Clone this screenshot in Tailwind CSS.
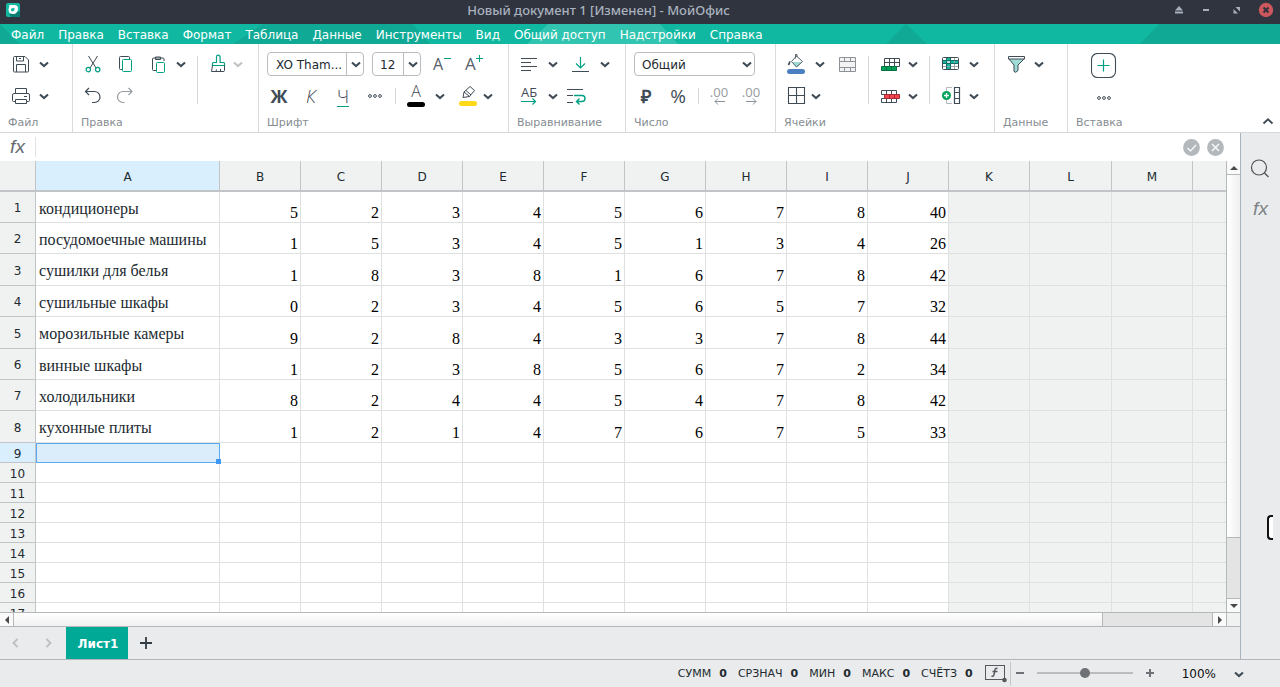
<!DOCTYPE html>
<html lang="ru">
<head>
<meta charset="utf-8">
<title>Новый документ 1 - МойОфис</title>
<script src="https://cdn.jsdelivr.net/npm/@tailwindcss/browser@4"></script>
</head>
<body class="flex h-screen flex-col overflow-hidden bg-white font-['DejaVu_Sans',sans-serif] text-xs text-[#222a30]">

<svg class="hidden" aria-hidden="true">
  <symbol id="chev" viewBox="0 0 12 12"><path d="M2 4.500 6 8 10 4.500" fill="none" stroke="currentColor" stroke-width="2.100"/></symbol>
  <symbol id="dots" viewBox="0 0 24 24"><g fill="none" stroke="#3f4b55"><circle cx="7" cy="12" r="1.400"/><circle cx="12" cy="12" r="1.400"/><circle cx="17" cy="12" r="1.400"/></g></symbol>
</svg>

<!-- Window title -->
<header class="flex h-6 shrink-0 items-center bg-[#2f343f] px-1.5 pb-1">
  <svg class="size-[14px] shrink-0" viewBox="0 0 14 14"><rect width="14" height="14" rx="2" fill="#12b8a0"/><path d="M14 8v6H5l-2-3z" fill="#087f75"/><path d="M3.500 2h5a3.500 3.500 0 0 1 3.500 3.500c0 3.500-2 5.500-5 5.500-2.800 0-4.500-1.500-4.500-4.500z" fill="#fff"/><path d="M5.200 5.500 8.500 4.800 8.500 7 7 8.500 5 8z" fill="#12b8a0"/></svg>
  <h1 class="flex-1 pr-2 pl-[14px] text-center font-['Noto_Sans',sans-serif] text-[13px] leading-5 font-medium text-[#a9b1be]">Новый документ 1 [Изменен] - МойОфис</h1>
  <div class="flex items-center gap-[13px] text-[#a9b0bb]">
    <button aria-label="Свернуть в заголовок" class="size-4"><svg viewBox="0 0 16 16"><path d="M8 4l4 4.500H4zM4 9.500h8v2H4z" fill="currentColor"/></svg></button>
    <button aria-label="Свернуть" class="size-4"><svg viewBox="0 0 16 16"><path d="M3 7h6v2H3z" fill="currentColor"/></svg></button>
    <button aria-label="Развернуть" class="size-4"><svg viewBox="0 0 16 16"><path d="M6.500 5H11v4.500zM4.500 7v4.500H9z" fill="currentColor"/></svg></button>
    <button aria-label="Закрыть" class="size-4"><svg viewBox="0 0 16 16"><circle cx="8" cy="8" r="7.200" fill="#cc575d"/><path d="M5.500 5.500l5 5M10.500 5.500l-5 5" stroke="#2f343f" stroke-width="2"/></svg></button>
  </div>
</header>

<!-- Menu -->
<nav class="relative h-5 shrink-0 overflow-hidden bg-[#11b8a1]">
  <svg class="absolute top-0 left-0 h-5 w-[1280px]" viewBox="0 0 1280 20" aria-hidden="true">
    <path d="M0 0 20 20H0zM263 0H413L430 20H233zM906 0 927 20H886zM1159 0H1280V20H1140z" fill="#10a995"/>
    <path d="M548 0H660L678 20H527z" fill="#31c4b0"/>
  </svg>
  <div class="relative flex h-5 items-center gap-[14px] pt-0.5 pl-[11px] leading-4 whitespace-nowrap text-white">
    <a href="#">Файл</a><a href="#">Правка</a><a href="#">Вставка</a><a href="#">Формат</a><a href="#">Таблица</a><a href="#">Данные</a><a href="#">Инструменты</a><a href="#">Вид</a><a href="#">Общий доступ</a><a href="#">Надстройки</a><a href="#">Справка</a>
  </div>
</nav>

<!-- Ribbon -->
<section class="flex h-[89px] shrink-0 border-b border-[#d5d7d9] text-[#3f4b55]">
  <div class="flex w-[73px] flex-col border-r border-[#d9dbdd] pt-1">
    <div class="flex h-8 items-center gap-[5px] pl-[9px]">
      <button aria-label="Сохранить"><svg class="size-6" viewBox="0 0 24 24" fill="none" stroke="#3f4b55"><path d="M5.500 4.500H16L19.500 8v11a1 1 0 0 1-1 1h-13a1 1 0 0 1-1-1v-13.500a1 1 0 0 1 1-1zM7.500 4.500v4.500h7v-4.500M10 6.500h2M7.500 20v-7.500h9V20"/></svg></button>
      <button aria-label="Варианты сохранения"><svg class="size-3"><use href="#chev"/></svg></button>
    </div>
    <div class="flex h-8 items-center gap-[5px] pl-[9px]">
      <button aria-label="Печать"><svg class="size-6" viewBox="0 0 24 24" fill="none" stroke="#3f4b55"><path d="M6.500 9.500v-5h11v5M6.500 17.500h-2a1 1 0 0 1-1-1v-5.500a1.500 1.500 0 0 1 1.500-1.500h14a1.500 1.500 0 0 1 1.500 1.500v5.500a1 1 0 0 1-1 1h-2M6.500 15.500h11v4h-11zM15 12.500h3"/></svg></button>
      <button aria-label="Варианты печати"><svg class="size-3"><use href="#chev"/></svg></button>
    </div>
    <h2 class="pt-0.5 pl-2 text-[11px] leading-[18px] text-[#868d92]">Файл</h2>
  </div>

  <div class="flex w-[186px] flex-col border-r border-[#d9dbdd] pt-1">
    <div class="flex h-16">
      <div class="w-[124px]">
        <div class="flex h-8 items-center gap-2 pl-2">
          <button aria-label="Вырезать"><svg class="size-6" viewBox="0 0 24 24" fill="none"><path d="M7.500 4 15 16M16.500 4 9 16" stroke="#3f4b55"/><circle cx="7.300" cy="17.600" r="2.200" stroke="#00a083" stroke-width="1.200"/><circle cx="16.700" cy="17.600" r="2.200" stroke="#00a083" stroke-width="1.200"/></svg></button>
          <button aria-label="Копировать"><svg class="size-6" viewBox="0 0 24 24" fill="none"><path d="M9 17.500H7.500a1 1 0 0 1-1-1V5.500a1 1 0 0 1 1-1h8a1 1 0 0 1 1 1V7" stroke="#3f4b55"/><rect x="9.500" y="7.500" width="9" height="12" rx="1" stroke="#00a083"/></svg></button>
          <button aria-label="Вставить"><svg class="size-6" viewBox="0 0 24 24" fill="none"><path d="M11 18.500H8.500a1 1 0 0 1-1-1V7a1 1 0 0 1 1-1h9.500a1 1 0 0 1 1 1v2M10.500 7.500V5h5v2.500z" stroke="#3f4b55"/><rect x="11.500" y="10.500" width="8" height="10" rx="1" stroke="#00a083"/></svg></button>
          <button aria-label="Варианты вставки" class="-ml-0.5"><svg class="size-3"><use href="#chev"/></svg></button>
        </div>
        <div class="flex h-8 items-center gap-2 pl-2">
          <button aria-label="Отменить"><svg class="size-6" viewBox="0 0 24 24" fill="none" stroke="#3f4b55"><path d="M8 4 4.500 7.500 8 11M4.500 7.500H13.500a5.500 5.500 0 0 1 0 11H11" stroke-width="1.200"/></svg></button>
          <button aria-label="Повторить"><svg class="size-6" viewBox="0 0 24 24" fill="none" stroke="#959ba0"><path d="M15.500 4 19 7.500 15.500 11M19 7.500H10a5.500 5.500 0 0 0 0 11h1.500" stroke-width="1.200"/></svg></button>
        </div>
      </div>
      <div class="mt-2 h-12 w-px bg-[#d5d7d9]"></div>
      <div class="flex h-8 items-center gap-0.5 pl-2">
        <button aria-label="Формат по образцу"><svg class="size-6" viewBox="0 0 24 24" fill="none"><path d="M6.500 12.500v-1a1 1 0 0 1 1-1h3V5a1.800 1.800 0 0 1 3.600 0v5.500h3.400a1 1 0 0 1 1 1v2h-12z" stroke="#00a083" stroke-width="1.200"/><path d="M6.500 13.500 5.500 19.500h12.500l.5-1v-5M10 19.500l.5-2M14.500 19v-2" stroke="#3f4b55"/></svg></button>
        <button aria-label="Варианты формата" class="text-[#bfc3c6]"><svg class="size-3"><use href="#chev"/></svg></button>
      </div>
    </div>
    <h2 class="pt-0.5 pl-2 text-[11px] leading-[18px] text-[#868d92]">Правка</h2>
  </div>

  <div class="flex w-[250px] flex-col border-r border-[#d9dbdd] pt-1">
    <div class="flex h-8 items-center gap-2 pl-2">
      <div class="relative h-6 w-[97px]">
        <select aria-label="Шрифт" class="h-6 w-full appearance-none rounded border border-[#b9bdc0] bg-white pt-0.5 pl-2 text-xs text-[#222a30]"><option>XO Tham...</option></select>
        <span class="pointer-events-none absolute top-0 right-0 flex h-6 w-[18px] items-center justify-center border-l border-[#b9bdc0]"><svg class="size-3"><use href="#chev"/></svg></span>
      </div>
      <div class="relative h-6 w-[49px]">
        <select aria-label="Размер шрифта" class="h-6 w-full appearance-none rounded border border-[#b9bdc0] bg-white pt-0.5 pl-[7px] text-xs text-[#222a30]"><option>12</option></select>
        <span class="pointer-events-none absolute top-0 right-0 flex h-6 w-[18px] items-center justify-center border-l border-[#b9bdc0]"><svg class="size-3"><use href="#chev"/></svg></span>
      </div>
      <button aria-label="Уменьшить шрифт"><svg class="size-6 overflow-visible" viewBox="0 0 24 24"><text x="4" y="18" font-family="Open Sans" font-weight="400" font-size="16" fill="#55606a">A</text><path d="M15 6.500h7" stroke="#00a083"/></svg></button>
      <button aria-label="Увеличить шрифт"><svg class="size-6 overflow-visible" viewBox="0 0 24 24"><text x="4" y="18" font-family="Open Sans" font-weight="400" font-size="17" fill="#55606a">A</text><path d="M15 6.500h7M18.500 3v7" stroke="#00a083"/></svg></button>
    </div>
    <div class="flex h-8 items-center pl-2">
      <button aria-label="Полужирный" class="mr-2 size-6 text-center font-['Open_Sans',sans-serif] text-[18px] leading-6 font-bold">Ж</button>
      <button aria-label="Курсив" class="mr-2 size-6 font-['Open_Sans',sans-serif] text-[18px] leading-6 font-light italic">К</button>
      <button aria-label="Подчёркнутый" class="mr-2 size-6"><span class="mx-auto block h-[21px] w-3 border-b border-[#00a083] text-center font-['Open_Sans',sans-serif] text-[18px] leading-5 font-light">Ч</span></button>
      <button aria-label="Ещё параметры шрифта"><svg class="size-6"><use href="#dots"/></svg></button>
      <div class="mx-2 h-4 w-px bg-[#d5d7d9]"></div>
      <button aria-label="Цвет текста" class="flex h-8 w-6 flex-col items-center justify-start"><span class="font-['Open_Sans',sans-serif] text-[16px] leading-[22px] font-light">A</span><span class="block h-[5px] w-[18px] rounded-full bg-black"></span></button>
      <button aria-label="Выбор цвета текста" class="ml-1.5"><svg class="size-3"><use href="#chev"/></svg></button>
      <button aria-label="Выделение цветом" class="ml-2.5"><svg class="size-6" viewBox="0 0 24 24"><path d="M7 13.500 8 8 14 2.500 18.500 6.500 13.500 12.500 7 13.500zM8 8l5.500 4.500M10 6.500 15 11" fill="none" stroke="#3f4b55"/><rect x="3" y="17" width="18" height="5" rx="2.500" fill="#ffd91a"/></svg></button>
      <button aria-label="Выбор цвета выделения" class="ml-0.5"><svg class="size-3"><use href="#chev"/></svg></button>
    </div>
    <h2 class="pt-0.5 pl-2 text-[11px] leading-[18px] text-[#868d92]">Шрифт</h2>
  </div>

  <div class="flex w-[117px] flex-col border-r border-[#d9dbdd] pt-1">
    <div class="flex h-8 items-center pl-2">
      <button aria-label="Выравнивание по горизонтали"><svg class="size-6" viewBox="0 0 24 24" stroke="#3f4b55"><path d="M4 6.500h16M4 10.500h10M4 14.500h16M4 18.500h10"/></svg></button>
      <button aria-label="Варианты по горизонтали" class="ml-1.5"><svg class="size-3"><use href="#chev"/></svg></button>
      <button aria-label="Выравнивание по вертикали" class="ml-2.5"><svg class="size-6" viewBox="0 0 24 24" fill="none"><path d="M11.500 5v11M7 11.500l4.500 4.500 4.500-4.500" stroke="#00a083" stroke-width="1.200"/><path d="M3 19.500h17" stroke="#3f4b55"/></svg></button>
      <button aria-label="Варианты по вертикали" class="ml-1.5"><svg class="size-3"><use href="#chev"/></svg></button>
    </div>
    <div class="flex h-8 items-center pl-2">
      <button aria-label="Направление текста"><svg class="size-6" viewBox="0 0 24 24" fill="none"><text x="12" y="13" text-anchor="middle" font-family="Open Sans" font-size="13" fill="#3f4b55">АБ</text><path d="M4 17.500h14M15.500 14.500l3 3-3 3" stroke="#00a083" stroke-width="1.200"/></svg></button>
      <button aria-label="Варианты направления" class="ml-1.5"><svg class="size-3"><use href="#chev"/></svg></button>
      <button aria-label="Перенос текста" class="ml-1"><svg class="size-6" viewBox="0 0 24 24" fill="none"><path d="M4 5.500h16M4 11.500h6M4 18.500h6" stroke="#3f4b55"/><path d="M11 11.500H19a2.500 2.500 0 0 1 0 6h-5M16.500 14.500l-3 3 3 3" stroke="#00a083" stroke-width="1.400"/></svg></button>
    </div>
    <h2 class="pt-0.5 pl-2 text-[11px] leading-[18px] text-[#868d92]">Выравнивание</h2>
  </div>

  <div class="flex w-[150px] flex-col border-r border-[#d9dbdd] pt-1">
    <div class="flex h-8 items-center pl-2">
      <div class="relative h-6 w-[121px]">
        <select aria-label="Числовой формат" class="h-6 w-full appearance-none rounded border border-[#b9bdc0] bg-white pt-0.5 pl-[7px] text-xs text-[#222a30]"><option>Общий</option></select>
        <svg class="pointer-events-none absolute top-1.5 right-0.5 size-3"><use href="#chev"/></svg>
      </div>
    </div>
    <div class="flex h-8 items-center pl-2">
      <button aria-label="Денежный формат" class="mr-2 size-6 font-['Open_Sans',sans-serif] text-[18px] leading-6 font-bold">₽</button>
      <button aria-label="Процентный формат" class="size-6 font-['Open_Sans',sans-serif] text-[19px] leading-6">%</button>
      <div class="mx-2 h-4 w-px bg-[#d5d7d9]"></div>
      <button aria-label="Меньше знаков" class="mr-2"><svg class="size-6 overflow-visible" viewBox="0 0 24 24" fill="none"><text x="12" y="13" text-anchor="middle" font-family="Open Sans" font-size="13" fill="#959ba0">.00</text><path d="M18 17.500H8M11 14.500l-3 3 3 3" stroke="#8c9297"/></svg></button>
      <button aria-label="Больше знаков"><svg class="size-6 overflow-visible" viewBox="0 0 24 24" fill="none"><text x="12" y="13" text-anchor="middle" font-family="Open Sans" font-size="13" fill="#959ba0">.00</text><path d="M7 17.500h10M14 14.500l3 3-3 3" stroke="#8c9297"/></svg></button>
    </div>
    <h2 class="pt-0.5 pl-2 text-[11px] leading-[18px] text-[#868d92]">Число</h2>
  </div>

  <div class="flex w-[219px] flex-col border-r border-[#d9dbdd] pt-1">
    <div class="flex h-16">
      <div class="w-[92px]">
        <div class="flex h-8 items-center pl-2">
          <button aria-label="Заливка"><svg class="size-6" viewBox="0 0 24 24" fill="none"><path d="M8 10h10.500l-5.500 5h-1z" fill="#9fdcd5"/><path d="M12.500 4 18.500 9.500 12.500 15 7.500 9.500zM11.500 6.500V2.500h1.500V5" stroke="#56616a"/><path d="M6 9.500 4.500 13" stroke="#3f4b55" stroke-width="1.800"/><rect x="3" y="17" width="18" height="5" rx="2.500" fill="#4a7fc0"/></svg></button>
          <button aria-label="Выбор заливки" class="ml-1.5"><svg class="size-3"><use href="#chev"/></svg></button>
          <button aria-label="Объединить ячейки" class="ml-2.5"><svg class="size-6" viewBox="0 0 24 24" fill="#f3f3f3" stroke="#8c9297"><path d="M3.500 5.500h16v14h-16zM3.500 9.500h16M3.500 15.500h16M8.500 5.500v4M14.500 5.500v4M8.500 15.500v4M14.500 15.500v4"/></svg></button>
        </div>
        <div class="flex h-8 items-center pl-2">
          <button aria-label="Границы"><svg class="size-6" viewBox="0 0 24 24" fill="none" stroke="#3f4b55"><path d="M4.500 3.500h16v16h-16zM12.500 3.500v16M4.500 11.500h16" stroke-width="1.100"/></svg></button>
          <button aria-label="Варианты границ" class="ml-0.5"><svg class="size-3"><use href="#chev"/></svg></button>
        </div>
      </div>
      <div class="mt-2 h-12 w-px bg-[#d5d7d9]"></div>
      <div class="w-[60px]">
        <div class="flex h-8 items-center gap-[5px] pl-[9px]">
          <button aria-label="Вставить строки"><svg class="size-6" viewBox="0 0 24 24" fill="none"><path d="M6.500 6.500h15v8h-15zM6.500 10.500h15M11.500 6.500v8M16.500 6.500v8" stroke="#3f4b55"/><path d="M3.500 14.500h15v4h-15zM8.500 14.500v4M13.500 14.500v4" fill="#00a35b" stroke="#08703f"/></svg></button>
          <button aria-label="Варианты вставки строк"><svg class="size-3"><use href="#chev"/></svg></button>
        </div>
        <div class="flex h-8 items-center gap-[5px] pl-[9px]">
          <button aria-label="Удалить строки"><svg class="size-6" viewBox="0 0 24 24" fill="none"><path d="M3.500 6.500h15v4h-15zM8.500 6.500v4M13.500 6.500v4M3.500 14.500h15v4h-15zM8.500 14.500v4M13.500 14.500v4" stroke="#3f4b55"/><path d="M6.500 10.500h15v4h-15zM11.500 10.500v4M16.500 10.500v4" fill="#f4424d" stroke="#a82c38"/></svg></button>
          <button aria-label="Варианты удаления строк"><svg class="size-3"><use href="#chev"/></svg></button>
        </div>
      </div>
      <div class="mt-2 h-12 w-px bg-[#d5d7d9]"></div>
      <div class="w-[60px]">
        <div class="flex h-8 items-center gap-[5px] pl-[9px]">
          <button aria-label="Закрепить область"><svg class="size-6" viewBox="0 0 24 24" fill="none"><path d="M3.500 5.500h16v12h-16z" fill="#fff"/><path d="M7.500 5.500h4v12h-4zM3.500 8.500h16v3h-16z" fill="#12b8a0"/><path d="M3.500 14.500h16M15.500 5.500v12" stroke="#9fa5a9"/><path d="M7.500 5.500v12M11.500 5.500v12M3.500 8.500h16M3.500 11.500h16" stroke="#176c66"/><path d="M8 9h3v2H8z" fill="#b9e6e1"/><rect x="3.500" y="5.500" width="16" height="12" rx="1" stroke="#3f4b55"/></svg></button>
          <button aria-label="Варианты закрепления"><svg class="size-3"><use href="#chev"/></svg></button>
        </div>
        <div class="flex h-8 items-center gap-[5px] pl-[9px]">
          <button aria-label="Вставить столбцы"><svg class="size-6" viewBox="0 0 24 24" fill="none"><path d="M13 3.500H7.500v16H13" stroke="#b4b8bb"/><path d="M15.500 3.500h5v16h-5zM15.500 8.500h5M15.500 14.500h5" stroke="#3f4b55" stroke-width="1.200"/><circle cx="7.500" cy="11.500" r="4.500" fill="#00a35b"/><path d="M5 11.500h5M7.500 9v5" stroke="#fff" stroke-width="1.300"/></svg></button>
          <button aria-label="Варианты вставки столбцов"><svg class="size-3"><use href="#chev"/></svg></button>
        </div>
      </div>
    </div>
    <h2 class="pt-0.5 pl-2 text-[11px] leading-[18px] text-[#868d92]">Ячейки</h2>
  </div>

  <div class="flex w-[73px] flex-col border-r border-[#d9dbdd] pt-1">
    <div class="flex h-16">
      <div class="flex h-8 items-center gap-[5px] pl-[9px]">
        <button aria-label="Фильтр"><svg class="size-6" viewBox="0 0 24 24"><path d="M4.500 6.500 10 13v6.500q1.500 2 4-1V13l6.500-6.500z" fill="#9fdcd5" stroke="#3f4b55"/><path d="M4.500 4.500h16v2.500h-16z" fill="#fff" stroke="#3f4b55"/></svg></button>
        <button aria-label="Варианты фильтра"><svg class="size-3"><use href="#chev"/></svg></button>
      </div>
    </div>
    <h2 class="pt-0.5 pl-2 text-[11px] leading-[18px] text-[#868d92]">Данные</h2>
  </div>

  <div class="flex flex-1 pt-1">
    <div class="flex flex-col pl-2">
      <div class="flex h-16 w-[55px] flex-col items-center pt-[5px]">
        <button aria-label="Вставить объект"><svg class="size-[26px]" viewBox="0 0 26 26" fill="none"><rect x=".5" y=".5" width="24" height="24" rx="6" stroke="#3f4b55" stroke-width="1.100"/><path d="M12.500 6.500v12M6.500 12.500h12" stroke="#00a083" stroke-width="1.200"/></svg></button>
        <button aria-label="Ещё объекты" class="mt-[7px]"><svg class="size-6"><use href="#dots"/></svg></button>
      </div>
      <h2 class="pt-0.5 text-[11px] leading-[18px] text-[#868d92]">Вставка</h2>
    </div>
    <button aria-label="Свернуть ленту" class="mt-auto mr-[6px] mb-1 ml-auto"><svg class="size-3" viewBox="0 0 12 12"><path d="M1.500 7.500 6 3.300 10.500 7.500" fill="none" stroke="#3f4b55" stroke-width="1.800"/></svg></button>
  </div>
</section>

<div class="flex min-h-0 flex-1">
  <main class="flex min-w-0 flex-1 flex-col">
    <!-- Formula bar -->
    <div class="flex h-7 shrink-0 items-center">
      <span class="w-[35px] text-center font-['Liberation_Sans',sans-serif] text-[19px] leading-6 text-[#666b6f] italic">fx</span>
      <input aria-label="Строка формул" class="h-5 min-w-0 flex-1 border-l border-[#e0e2e3] px-2 outline-none">
      <button aria-label="Принять" class="mr-1.5"><svg class="size-[18px]" viewBox="0 0 18 18"><circle cx="9.500" cy="9.500" r="8.400" fill="#b3b8bc"/><path d="M5.500 10 8.500 13 14 7" fill="none" stroke="#fff" stroke-width="1.200"/></svg></button>
      <button aria-label="Отменить ввод" class="mr-4"><svg class="size-[18px]" viewBox="0 0 18 18"><circle cx="9.500" cy="9.500" r="8.400" fill="#b3b8bc"/><path d="M6 6l7 7M13 6l-7 7" stroke="#fff" stroke-width="1.200"/></svg></button>
    </div>

    <!-- Sheet -->
    <div class="flex min-h-0 flex-1">
      <div class="min-w-0 flex-1 overflow-hidden">
        <table class="w-[1274px] table-fixed border-separate border-spacing-0">
          <colgroup id="cols"></colgroup>
          <thead><tr id="head" class="h-[31px]"></tr></thead>
          <tbody id="rows"></tbody>
        </table>
      </div>
      <div class="flex w-[14px] shrink-0 flex-col border-l border-[#b5b8ba] bg-[#e4e4e4]">
        <button aria-label="Вверх" class="flex h-[14px] shrink-0 items-center justify-center border-b border-[#b5b8ba] bg-[#fafafa]"><svg class="size-2" viewBox="0 0 8 8"><path d="M0 6 4 2l4 4z" fill="#4a4a4a"/></svg></button>
        <div class="min-h-0 grow-[6] basis-0 border-b border-[#b5b8ba] bg-linear-to-r from-white to-[#f0f0f0]"></div>
        <div class="min-h-0 grow basis-0"></div>
        <button aria-label="Вниз" class="flex h-[14px] shrink-0 items-center justify-center border-t border-[#b5b8ba] bg-[#fafafa]"><svg class="size-2" viewBox="0 0 8 8"><path d="M0 2 4 6l4-4z" fill="#4a4a4a"/></svg></button>
      </div>
    </div>
    <div class="flex h-[15px] shrink-0 border-y border-[#b5b8ba] bg-[#e4e4e4]">
      <button aria-label="Влево" class="flex w-[14px] items-center justify-center border-r border-[#b5b8ba] bg-[#fafafa]"><svg class="size-2" viewBox="0 0 8 8"><path d="M6 0 2 4l4 4z" fill="#4a4a4a"/></svg></button>
      <div class="grow-[10] border-r border-[#b5b8ba] bg-linear-to-b from-white to-[#f0f0f0]"></div>
      <div class="grow"></div>
      <button aria-label="Вправо" class="flex w-[14px] items-center justify-center border-l border-[#b5b8ba] bg-[#fafafa]"><svg class="size-2" viewBox="0 0 8 8"><path d="M2 0 6 4 2 8z" fill="#4a4a4a"/></svg></button>
      <div class="w-[14px] border-l border-[#b5b8ba] bg-[#f0f2f2]"></div>
    </div>

    <!-- Sheet tabs -->
    <div class="flex h-8 shrink-0 items-center bg-[#e9ebec]">
      <button aria-label="Предыдущий лист" class="ml-2"><svg class="size-4" viewBox="0 0 16 16"><path d="M9.500 4 5.500 8l4 4" fill="none" stroke="#bdbfc1" stroke-width="1.800"/></svg></button>
      <button aria-label="Следующий лист" class="ml-4"><svg class="size-4" viewBox="0 0 16 16"><path d="M6.500 4l4 4-4 4" fill="none" stroke="#bdbfc1" stroke-width="1.800"/></svg></button>
      <button class="ml-2.5 h-8 w-[62px] bg-[#00a896] pt-0.5 pl-0.5 text-center font-bold text-white">Лист1</button>
      <button aria-label="Добавить лист" class="ml-2.5"><svg class="size-4" viewBox="0 0 16 16"><path d="M8 2v12M2 8h12" stroke="#343c44" stroke-width="1.800"/></svg></button>
    </div>
  </main>

  <aside class="relative flex w-10 shrink-0 flex-col items-center border-l border-[#aab4bd] bg-[#e9ebec] pt-6">
    <button aria-label="Поиск"><svg class="size-6" viewBox="0 0 24 24" fill="none" stroke="#4e5256" stroke-width="1.200"><circle cx="10" cy="10.500" r="7.500"/><path d="M15.500 16l4 4"/></svg></button>
    <button aria-label="Функции" class="mt-4 font-['Liberation_Sans',sans-serif] text-[19px] leading-6 text-[#7d8286] italic">fx</button>
    <div class="absolute right-[7px] bottom-[119px] h-[25px] w-1.5 rounded-l border-2 border-r-0 border-[#111] bg-white"></div>
  </aside>
</div>

<!-- Status bar -->
<footer class="flex h-7 shrink-0 items-center border-t border-[#b0b6bb] bg-[#e9ebec] text-[11px]">
  <dl class="ml-auto flex gap-[11px] leading-5 [&_dd]:font-bold [&>div]:flex [&>div]:gap-2">
    <div><dt>СУММ</dt><dd>0</dd></div>
    <div><dt>СРЗНАЧ</dt><dd>0</dd></div>
    <div><dt>МИН</dt><dd>0</dd></div>
    <div><dt>МАКС</dt><dd>0</dd></div>
    <div><dt>СЧЁТЗ</dt><dd>0</dd></div>
  </dl>
  <button aria-label="Выбор функций" class="ml-3"><svg class="h-5 w-[22px]" viewBox="0 0 22 20" fill="none"><rect x=".5" y="1.500" width="19" height="14" stroke="#55595d"/><path d="M12.500 4.500c-3-1-2.500 2-3 4s-.5 4.500-3 3.500M7.500 7.500h5" stroke="#55595d" stroke-width="1.500"/><circle cx="19.500" cy="16" r="2.300" fill="#55595d"/></svg></button>
  <div class="ml-[3px] h-6 w-px bg-[#c4c8cb]"></div>
  <button aria-label="Уменьшить масштаб" class="ml-0.5"><svg class="size-4" viewBox="0 0 16 16"><path d="M3 7h8" stroke="#6e7276" stroke-width="2"/></svg></button>
  <input type="range" aria-label="Масштаб" min="0" max="100" value="50" class="mb-0.5 ml-2 h-4 w-[96px] appearance-none bg-transparent [&::-webkit-slider-runnable-track]:h-0.5 [&::-webkit-slider-runnable-track]:bg-[#babcbe] [&::-webkit-slider-thumb]:-mt-1 [&::-webkit-slider-thumb]:size-2.5 [&::-webkit-slider-thumb]:appearance-none [&::-webkit-slider-thumb]:rounded-full [&::-webkit-slider-thumb]:bg-[#6e7276]">
  <button aria-label="Увеличить масштаб" class="ml-[9px]"><svg class="size-4" viewBox="0 0 16 16"><path d="M8 3v8M4 7h8" stroke="#6e7276" stroke-width="2"/></svg></button>
  <button class="ml-6 flex items-center text-xs text-[#111]">100%<svg class="mr-[35px] ml-[17px] size-3 text-[#3f4b55]"><use href="#chev"/></svg></button>
</footer>

<script>
  const widths = [36, 184, 81, 81, 81, 81, 81, 81, 81, 81, 81, 81, 82, 81, 81];
  document.getElementById('cols').innerHTML = widths.map(w => `<col style="width:${w}px">`).join('');

  const letters = ['A','B','C','D','E','F','G','H','I','J','K','L','M',''];
  document.getElementById('head').innerHTML =
    '<td class="border-r border-b-2 border-[#c2c5c7] bg-[#f0f2f2]"></td>' +
    letters.map((l, i) => i === 0
      ? '<th scope="col" class="border-r border-b-2 border-[#c2c5c7] bg-[#d9effe] p-0 pt-0.5 font-normal">A</th>'
      : `<th scope="col" class="border-r border-b-2 border-[#c2c5c7] bg-[#f0f2f2] p-0 pt-0.5 font-normal">${l}</th>`).join('');

  const data = [
    ['кондиционеры', 31, 5,2,3,4,5,6,7,8,40],
    ['посудомоечные машины', 31, 1,5,3,4,5,1,3,4,26],
    ['сушилки для белья', 32, 1,8,3,8,1,6,7,8,42],
    ['сушильные шкафы', 31, 0,2,3,4,5,6,5,7,32],
    ['морозильные камеры', 32, 9,2,8,4,3,3,7,8,44],
    ['винные шкафы', 31, 1,2,3,8,5,6,7,2,34],
    ['холодильники', 31, 8,2,4,4,5,4,7,8,42],
    ['кухонные плиты', 32, 1,2,1,4,7,6,7,5,33]
  ];
  let html = '';
  for (let r = 1; r <= 17; r++) {
    const d = data[r - 1];
    html += `<tr style="height:${d ? d[1] : 20}px">`;
    html += r === 9
      ? '<th scope="row" class="border-r border-b border-[#c2c5c7] bg-[#d9effe] p-0 pt-0.5 leading-4 font-normal">9</th>'
      : `<th scope="row" class="border-r border-b border-[#c2c5c7] bg-[#f0f2f2] p-0 pt-0.5 leading-4 font-normal">${r}</th>`;
    html += r === 9
      ? '<td class="relative border border-[#5aa9f5] bg-[#dbecfb] p-0"><span class="absolute -right-0.5 -bottom-0.5 z-10 size-[5px] bg-[#3f98f5]"></span></td>'
      : `<td class="overflow-hidden border-r border-b border-[#dfe1e1] bg-white pt-[3px] pr-0 pb-0 pl-[3px] text-left align-middle font-['Liberation_Serif',serif] text-base leading-4 whitespace-nowrap">${d ? d[0] : ''}</td>`;
    for (let c = 0; c < 9; c++)
      html += `<td class="border-r border-b border-[#dfe1e1] bg-white py-0 pr-0.5 pl-0 text-right align-bottom font-['Liberation_Serif',serif] text-base leading-[18px] text-black">${d ? d[c + 2] : ''}</td>`;
    for (let c = 0; c < 4; c++)
      html += '<td class="border-r border-b border-[#dfe1e1] bg-[#f0f2f2] p-0"></td>';
    html += '</tr>';
  }
  document.getElementById('rows').innerHTML = html;
</script>
</body>
</html>
